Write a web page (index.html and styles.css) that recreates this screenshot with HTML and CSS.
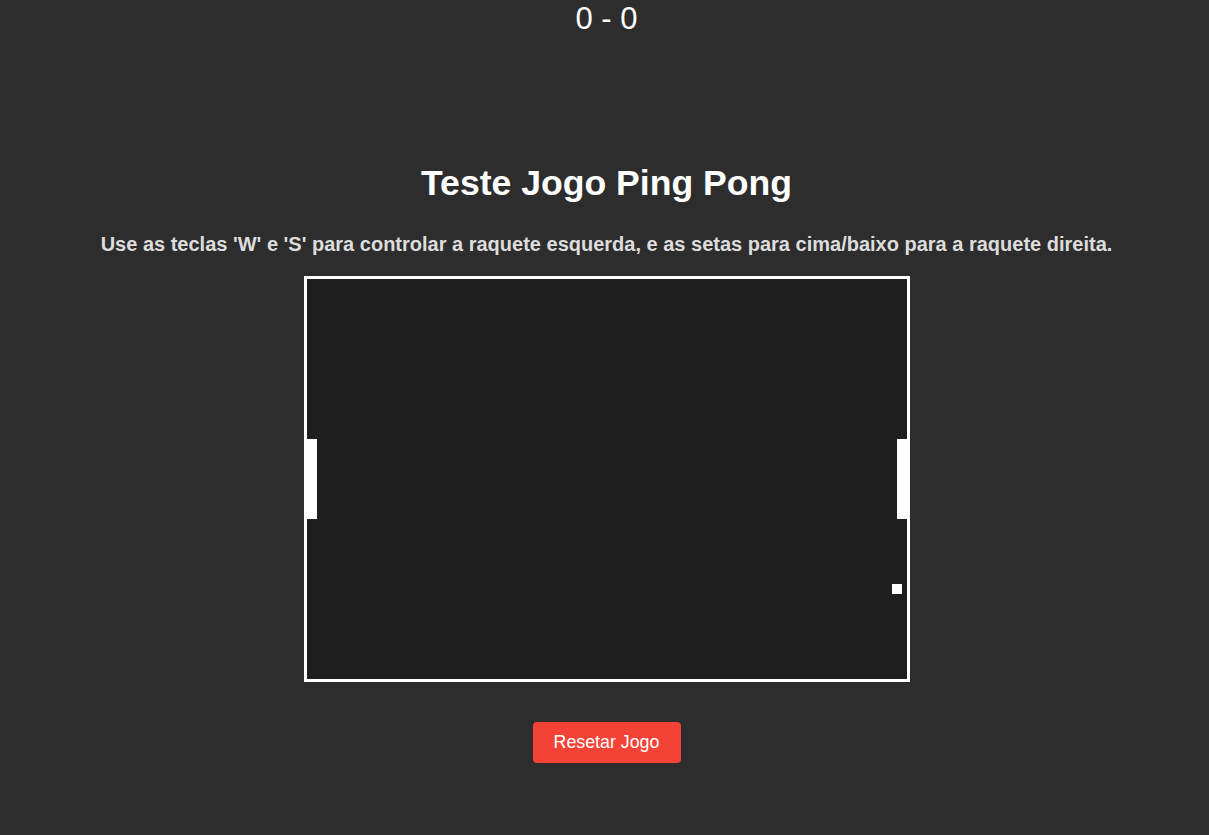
FILE: index.html
```html
<!DOCTYPE html>
<html lang="pt">
<head>
<meta charset="utf-8">
<title>Teste Jogo Ping Pong</title>
<link rel="stylesheet" href="styles.css">
</head>
<body>
<div class="score">0 - 0</div>
<main class="game">
  <h1 class="title">Teste Jogo Ping Pong</h1>
  <p class="hint">Use as teclas 'W' e 'S' para controlar a raquete esquerda, e as setas para cima/baixo para a raquete direita.</p>
  <div class="board">
    <div class="paddle paddle-left"></div>
    <div class="paddle paddle-right"></div>
    <div class="ball"></div>
  </div>
  <button class="reset">Resetar Jogo</button>
</main>
</body>
</html>
```
FILE: styles.css
```css
html, body {
  margin: 0;
  padding: 0;
}
body {
  background: #2d2d2d;
  color: #fff;
  font-family: "Liberation Sans", Arial, sans-serif;
  text-align: center;
  min-height: 835px;
  padding-left: 4px;
}
.score {
  padding-top: 2px;
  font-size: 31px;
  line-height: 34px;
  color: #fff;
}
.game {
  display: flex;
  flex-direction: column;
  align-items: center;
  padding-top: 127px;
}
.title {
  margin: 0;
  font-size: 35.6px;
  line-height: 40px;
  font-weight: bold;
  color: #fff;
}
.hint {
  margin: 29px 0 0;
  font-size: 20px;
  line-height: 24px;
  font-weight: bold;
  color: #ddd;
}
.board {
  position: relative;
  margin-top: 20px;
  width: 600px;
  height: 400px;
  border: 3px solid #fff;
  background: #1e1e1e;
}
.paddle {
  position: absolute;
  top: 160px;
  width: 10px;
  height: 80px;
  background: #fff;
}
.paddle-left { left: 0; }
.paddle-right { right: 0; }
.ball {
  position: absolute;
  left: 585px;
  top: 305px;
  width: 10px;
  height: 10px;
  background: #fff;
}
.reset {
  margin-top: 40px;
  width: 148px;
  height: 41px;
  border: none;
  border-radius: 4px;
  background: #f44336;
  color: #fff;
  font-family: "Liberation Sans", Arial, sans-serif;
  font-size: 17.8px;
  cursor: pointer;
}
```
